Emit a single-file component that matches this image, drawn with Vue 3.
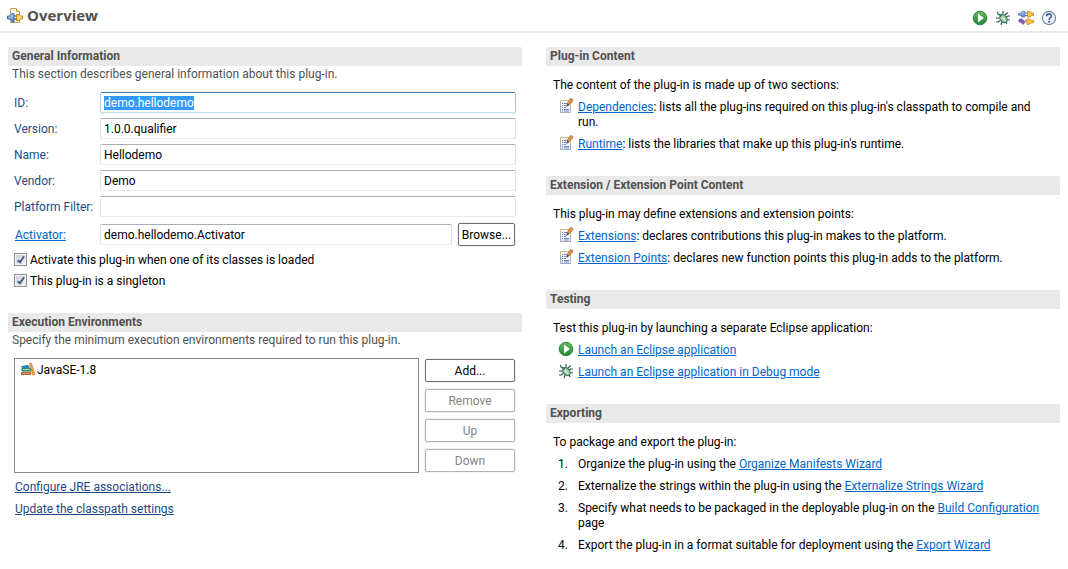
<script setup>
import { onMounted, reactive, ref } from 'vue'

const fields = reactive([
  { id: 'plugin-id', label: 'ID:', value: 'demo.hellodemo' },
  { id: 'plugin-version', label: 'Version:', value: '1.0.0.qualifier' },
  { id: 'plugin-name', label: 'Name:', value: 'Hellodemo' },
  { id: 'plugin-vendor', label: 'Vendor:', value: 'Demo' },
  { id: 'plugin-filter', label: 'Platform Filter:', value: '' },
])
const activator = ref('demo.hellodemo.Activator')
const lazyStart = ref(true)
const singleton = ref(true)

const envButtons = [
  { label: 'Add...', disabled: false },
  { label: 'Remove', disabled: true },
  { label: 'Up', disabled: true },
  { label: 'Down', disabled: true },
]

const sections = [
  {
    title: 'Plug-in Content',
    intro: 'The content of the plug-in is made up of two sections:',
    items: [
      { icon: 'page', link: 'Dependencies', after: ": lists all the plug-ins required on this plug-in's classpath to compile and run." },
      { icon: 'page', link: 'Runtime', after: ": lists the libraries that make up this plug-in's runtime." },
    ],
  },
  {
    title: 'Extension / Extension Point Content',
    intro: 'This plug-in may define extensions and extension points:',
    items: [
      { icon: 'page', link: 'Extensions', after: ': declares contributions this plug-in makes to the platform.' },
      { icon: 'page', link: 'Extension Points', after: ': declares new function points this plug-in adds to the platform.' },
    ],
  },
  {
    title: 'Testing',
    intro: 'Test this plug-in by launching a separate Eclipse application:',
    items: [
      { icon: 'run', link: 'Launch an Eclipse application', after: '' },
      { icon: 'bug', link: 'Launch an Eclipse application in Debug mode', after: '' },
    ],
  },
  {
    title: 'Exporting',
    intro: 'To package and export the plug-in:',
    items: [
      { before: 'Organize the plug-in using the ', link: 'Organize Manifests Wizard', after: '' },
      { before: 'Externalize the strings within the plug-in using the ', link: 'Externalize Strings Wizard', after: '' },
      { before: 'Specify what needs to be packaged in the deployable plug-in on the ', link: 'Build Configuration', after: ' page' },
      { before: 'Export the plug-in in a format suitable for deployment using the ', link: 'Export Wizard', after: '' },
    ],
  },
]

onMounted(() => {
  const first = document.getElementById('plugin-id')
  first.focus()
  first.select()
})
</script>

<template>
  <div class="page">
    <svg class="defs" aria-hidden="true">
      <defs>
        <linearGradient id="green" x1="0" y1="0" x2="0" y2="1">
          <stop offset="0" stop-color="#6cba62" />
          <stop offset="1" stop-color="#218535" />
        </linearGradient>
        <linearGradient id="blue" x1="0" y1="0" x2="0" y2="1">
          <stop offset="0" stop-color="#b4cdf0" />
          <stop offset="1" stop-color="#5580bf" />
        </linearGradient>
        <symbol id="run" viewBox="0 0 16 16">
          <circle cx="8" cy="8" r="6.8" fill="url(#green)" stroke="#2f8540" />
          <path d="M6 3.4 L11.8 8 L6 12.6 Z" fill="#fff" />
        </symbol>
        <symbol id="bug" viewBox="0 0 16 16">
          <path
            d="M5 5 L3 4 L2.5 2 M8 4.5 L8 1 M10 5 L12 3 L13 3 M4.5 8 H1 M5 10.5 L3.5 12 L1 12 M7 12 L6 15 M11 12 L12 14 M12 9.5 L15 10 M11.5 7 L13 6 L15 6"
            fill="none" stroke="#2f5f59" stroke-width="1.2"
          />
          <ellipse cx="8.5" cy="8.7" rx="3.2" ry="4.4" transform="rotate(-38 8.5 8.7)" fill="#9ccba6" stroke="#2f665e" />
          <circle cx="5.6" cy="5.3" r="1.3" fill="#3b6f67" />
          <path d="M7 7 L10 10.5" stroke="#d6efc8" stroke-width="1.8" />
        </symbol>
        <symbol id="page" viewBox="0 0 16 16">
          <path d="M2.5 2.5 H12.5 V14.5 H2.5 Z" fill="#f3f7fd" stroke="#c9bd92" />
          <path d="M2.5 7 V14.5 H12.5 V9" fill="none" stroke="#a3aec2" />
          <path d="M4 5.5 H5 M6 5.5 H9 M4 7.5 H5 M6 7.5 H8 M4 9.5 H5 M6 9.5 H8 M4 11.5 H5 M6 11.5 H11 M4 13 H5 M6 13 H11" stroke="#6a86c2" />
          <path d="M9 7.5 L9.6 4.8 L12.3 0.6 L14.9 1.4 L14.7 3 L11.6 6.4 Z" fill="#dc9450" stroke="#b0692f" stroke-width="0.7" />
          <path d="M8.2 9.2 L9.3 5.6 L11.3 6.8 Z" fill="#4c4a4a" />
        </symbol>
        <symbol id="books" viewBox="0 0 16 16">
          <path d="M1 4 L8 3 L9.5 4.5 V6 H2 Z" fill="#2388b8" />
          <path d="M2 6 H11 V9.5 H2 L1 8 Z" fill="#2b8f73" />
          <path d="M3 7.5 H10" stroke="#a6d8b7" />
          <path d="M1 10 H11 V13 H1 Z" fill="#b65c32" />
          <path d="M2 11.5 H10" stroke="#e4a06d" />
          <path d="M9.5 1.5 L11.3 1 L15 12.5 L12.6 13 Z" fill="#eda23b" stroke="#b86c23" stroke-width="0.6" />
        </symbol>
        <symbol id="overview" viewBox="0 0 16 16">
          <path d="M3.5 0.5 H9.5 L12.5 3.5 V14.5 H3.5 Z" fill="#fffdf2" stroke="#c79c50" />
          <path d="M9.5 0.5 V3.5 H12.5" fill="#f0dda6" stroke="#c79c50" />
          <path d="M0 9.5 H2 M7 8 H10 M7 11 H10" stroke="#4b6fa7" stroke-width="1.4" />
          <path d="M0.5 8 H2.5 L4 6.5 H5 V5.5 H7 V14 H5 V12.5 H4 L2.5 11 H0.5 Z" fill="url(#blue)" stroke="#426ba6" />
          <path d="M9.5 6.5 H12 L13.5 8 H15.5 V11 H13.5 L12 12.5 H9.5 Z" fill="#f7d568" stroke="#bd861b" />
        </symbol>
        <symbol id="plugs" viewBox="0 0 16 16">
          <path d="M6 3 H10 M6 5.5 H10" stroke="#4b6fa7" />
          <path d="M0.5 3.3 H2.5 L4 1.5 H7 V7 H4 L2.5 5.2 H0.5 Z" fill="url(#blue)" stroke="#628bc7" />
          <path d="M9.5 1.5 H12 L13.3 3 H15.5 V5.5 H13.3 L12 7 H9.5 Z" fill="#f5c457" stroke="#d08e25" />
          <path d="M1 9.5 L4 9 L7 12 L5 14.5 L3 12 L1 12 Z" fill="#7a5cbd" stroke="#5c43a2" stroke-width="0.7" />
          <path d="M6 11.5 L9 10.5" stroke="#b23e6e" stroke-width="1.3" />
          <path d="M9 9 H11.5 L13 10.3 H15.5 V12.7 H13 L11.5 14.3 H9 Z" fill="#f5c457" stroke="#d08e25" />
        </symbol>
        <symbol id="help" viewBox="0 0 16 16">
          <circle cx="8" cy="8" r="6.6" fill="#eff3f9" stroke="#70849f" stroke-width="1.1" />
          <path d="M5.7 6.2 C5.7 3 10.4 3.2 10.4 5.9 C10.4 7.6 8.1 7.7 8.1 9.8" fill="none" stroke="#4a6088" stroke-width="1.6" />
          <rect x="7.2" y="10.9" width="1.8" height="1.7" fill="#4a6088" />
        </symbol>
      </defs>
    </svg>

    <header class="topbar">
      <svg class="icon"><use href="#overview" /></svg>
      <h1>Overview</h1>
      <nav class="tools">
        <button type="button" aria-label="Run"><svg class="icon"><use href="#run" /></svg></button>
        <button type="button" aria-label="Debug"><svg class="icon"><use href="#bug" /></svg></button>
        <button type="button" aria-label="Export"><svg class="icon"><use href="#plugs" /></svg></button>
        <button type="button" aria-label="Help"><svg class="icon"><use href="#help" /></svg></button>
      </nav>
    </header>

    <main class="columns">
      <div class="column">
        <section>
          <h2>General Information</h2>
          <p class="desc">This section describes general information about this plug-in.</p>
          <form class="form" @submit.prevent>
            <div v-for="f in fields" :key="f.id" class="row">
              <label :for="f.id">{{ f.label }}</label>
              <input :id="f.id" v-model="f.value" type="text" autocomplete="off" spellcheck="false">
            </div>
            <div class="row activator">
              <a id="activator-label" href="#activator">Activator:</a>
              <input v-model="activator" type="text" aria-labelledby="activator-label" spellcheck="false">
              <button type="button" class="button">Browse...</button>
            </div>
            <label class="check"><input v-model="lazyStart" type="checkbox"><span>Activate this plug-in when one of its classes is loaded</span></label>
            <label class="check"><input v-model="singleton" type="checkbox"><span>This plug-in is a singleton</span></label>
          </form>
        </section>

        <section>
          <h2>Execution Environments</h2>
          <p class="desc">Specify the minimum execution environments required to run this plug-in.</p>
          <div class="env">
            <ul class="env-list">
              <li><svg class="icon"><use href="#books" /></svg>JavaSE-1.8</li>
            </ul>
            <div class="env-buttons">
              <button v-for="b in envButtons" :key="b.label" type="button" class="button" :disabled="b.disabled">{{ b.label }}</button>
            </div>
          </div>
          <div class="env-links">
            <a href="#jre">Configure JRE associations...</a>
            <a href="#classpath">Update the classpath settings</a>
          </div>
        </section>
      </div>

      <div class="column">
        <section v-for="s in sections" :key="s.title">
          <h2>{{ s.title }}</h2>
          <div class="body">
            <p>{{ s.intro }}</p>
            <div v-for="(item, i) in s.items" :key="item.link" class="item">
              <svg v-if="item.icon" class="icon"><use :href="'#' + item.icon" /></svg>
              <span v-else class="number">{{ i + 1 }}.</span>
              <p>{{ item.before }}<a href="#open">{{ item.link }}</a>{{ item.after }}</p>
            </div>
          </div>
        </section>
      </div>
    </main>
  </div>
</template>

<style>
body {
  margin: 0;
  background: #fff;
}
</style>

<style scoped>
.page {
  font-family: Roboto, "Open Sans", sans-serif;
  font-size: 12px;
  line-height: 15px;
  color: #000;
}
.defs {
  position: absolute;
  width: 0;
  height: 0;
}
.icon {
  display: block;
  flex: none;
  width: 16px;
  height: 16px;
}
h1,
h2,
p,
ul {
  margin: 0;
  padding: 0;
}
.topbar {
  display: flex;
  align-items: center;
  height: 31px;
  padding: 0 11px 0 7px;
  border-bottom: 2px solid #e8e8e8;
}
h1 {
  margin-left: 4px;
  padding-bottom: 2px;
  font-family: "Open Sans", sans-serif;
  font-size: 15px;
  line-height: 18px;
  color: #505050;
}
.tools {
  display: flex;
  gap: 7px;
  margin-left: auto;
  padding-top: 5px;
}
.tools button {
  padding: 0;
  border: 0;
  background: none;
}
.columns {
  display: grid;
  grid-template-columns: minmax(0, 1fr) minmax(0, 1fr);
  gap: 24px;
  padding: 14px 8px;
}
.column {
  display: flex;
  flex-direction: column;
  gap: 24px;
}
h2 {
  padding: 2px 4px;
  border-radius: 2px 2px 0 0;
  background: #e9e9e9;
  font-size: 12px;
  line-height: 15px;
  color: #505050;
}
.desc {
  padding: 1px 0 0 4px;
  color: #505050;
}
.form {
  display: flex;
  flex-direction: column;
  gap: 5px;
  padding: 10px 6px 1px;
}
.row {
  display: flex;
  align-items: center;
}
.row label,
.row a {
  flex: none;
  width: 86px;
  padding-top: 2px;
  color: #1d4a85;
}
.row a {
  width: 85px;
  padding-left: 1px;
  color: #0066cc;
}
.row input {
  flex: 1;
  min-width: 0;
  box-sizing: border-box;
  height: 21px;
  padding: 0 3px;
  border: 1px solid #e3e9ef;
  border-top-color: #abadb3;
  border-right-color: #dbdfe6;
  border-left-color: #e2e3ea;
  border-radius: 2px;
  background: #fff;
  font: inherit;
  color: #000;
  outline: none;
}
.row input:focus {
  border-color: #3d7bad #a4c9e3 #b7d9ed #b5cfe7;
}
.row input::selection {
  background: #3399ff;
  color: #fff;
}
.activator {
  padding-top: 1px;
}
.button {
  box-sizing: border-box;
  height: 23px;
  padding: 2px 0 0;
  border: 1px solid #707070;
  border-radius: 2px;
  background: #fff;
  box-shadow: 0 0 0 1px #f2f2f2;
  font: inherit;
  color: #000;
}
.button:disabled {
  border-color: #adb2b5;
  color: #838383;
}
.activator .button {
  flex: none;
  width: 57px;
  margin: 0 1px 0 6px;
}
.check {
  display: flex;
  align-items: center;
  gap: 3px;
  height: 16px;
}
.check span {
  padding-top: 2px;
}
.check input {
  appearance: none;
  position: relative;
  box-sizing: border-box;
  width: 13px;
  height: 13px;
  margin: 0;
  border: 1px solid #8e8f8f;
  background: linear-gradient(135deg, #c9cfd6, #f6f6f6);
  box-shadow: inset 0 0 0 1px #f4f4f4;
}
.check input:checked::after {
  content: "";
  position: absolute;
  left: 4px;
  top: 1px;
  width: 2px;
  height: 6px;
  border: solid #4a5f97;
  border-width: 0 2px 2px 0;
  transform: rotate(35deg);
}
.env {
  display: flex;
  gap: 6px;
  padding: 10px 7px 0 6px;
}
.env-list {
  flex: 1;
  border: 1px solid #828790;
  list-style: none;
}
.env-list li {
  display: flex;
  align-items: center;
  gap: 1px;
  padding: 3px 5px;
}
.env-buttons {
  display: flex;
  flex-direction: column;
  gap: 7px;
  width: 90px;
  padding: 1px 0;
}
.env-links {
  display: flex;
  flex-direction: column;
  align-items: flex-start;
  gap: 7px;
  padding: 7px 7px 0;
}
.env-links a {
  color: #1d4a85;
}
.body {
  display: flex;
  flex-direction: column;
  gap: 7px;
  padding: 12px 8px 0 7px;
}
.item {
  display: flex;
  gap: 4px;
  padding-left: 5px;
}
.item .icon {
  margin: -2px 0 -1px;
}
.number {
  flex: none;
  width: 16px;
}
.item a {
  color: #0066cc;
}
</style>
